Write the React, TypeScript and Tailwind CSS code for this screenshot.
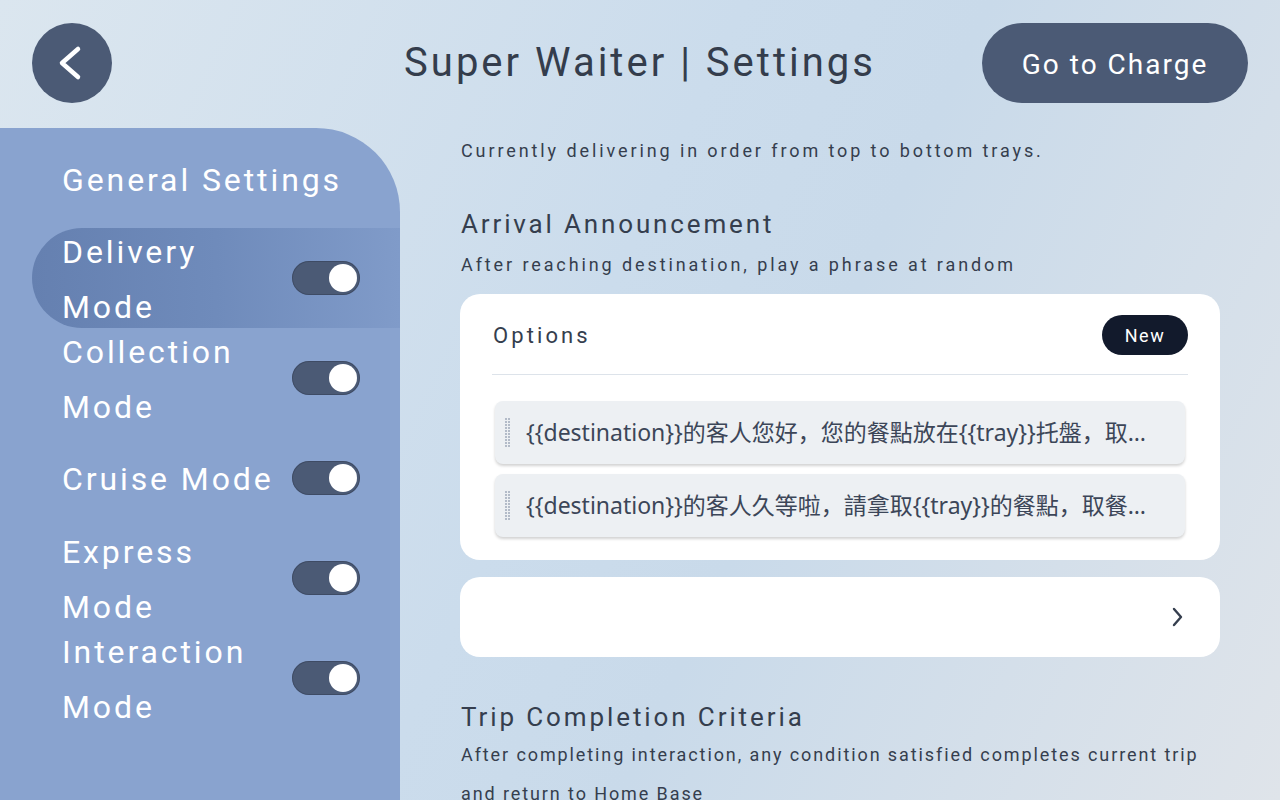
import { useState } from "react";

const rows = [
  { label: "Delivery Mode", two: true, active: true },
  { label: "Collection Mode", two: true },
  { label: "Cruise Mode", two: false },
  { label: "Express Mode", two: true },
  { label: "Interaction Mode", two: true },
];

const phrases = [
  "{{destination}}的客人您好，您的餐點放在{{tray}}托盤，取餐後請按下完成",
  "{{destination}}的客人久等啦，請拿取{{tray}}的餐點，取餐後請按下完成",
];

function Toggle({ on }: { on: boolean }) {
  return (
    <div className="w-[68px] h-[34px] shrink-0 rounded-full bg-[#4b5a75] flex items-center justify-end px-[3px] shadow-[inset_0_0_0_1px_rgba(40,50,70,0.35)]">
      <div className={on ? "w-[28px] h-[28px] rounded-full bg-white" : "w-[28px] h-[28px] rounded-full bg-white"} />
    </div>
  );
}

function DragHandle() {
  return (
    <svg width="6" height="30" viewBox="0 0 6 30" className="shrink-0">
      {Array.from({ length: 10 }).map((_, i) => (
        <g key={i} fill="#b3bbc8">
          <rect x="0" y={i * 3} width="2" height="2" />
          <rect x="3" y={i * 3} width="2" height="2" />
        </g>
      ))}
    </svg>
  );
}

export default function App() {
  const [toggles] = useState(rows.map(() => true));

  return (
    <div
      className="w-[1280px] h-[800px] overflow-hidden flex flex-col bg-[linear-gradient(115deg,#dbe6ef_0%,#cbdcec_45%,#c9daea_60%,#dfe4ea_100%)] text-[#353e4e]"
      style={{ fontFamily: "Roboto, 'Noto Sans', 'Noto Sans CJK SC', sans-serif" }}
    >
      {/* Header */}
      <header className="h-[128px] shrink-0 grid grid-cols-[1fr_auto_1fr] items-center px-[32px] pb-[2px]">
        <button className="w-[80px] h-[80px] rounded-full bg-[#4b5a75] flex items-center justify-center">
          <svg width="40" height="40" viewBox="0 0 40 40" fill="none">
            <path d="M26 6 L10 20 L26 34" stroke="white" strokeWidth="4.5" strokeLinecap="round" strokeLinejoin="round" />
          </svg>
        </button>
        <h1 className="text-[40px] tracking-[3px] text-[#343d4c]">Super Waiter | Settings</h1>
        <div className="flex justify-end">
          <button className="w-[266px] h-[80px] rounded-full bg-[#4b5a75] text-white text-[28px] tracking-[2px] flex items-center justify-center pt-[4px]">
            Go to Charge
          </button>
        </div>
      </header>

      <div className="flex flex-1 min-h-0">
        {/* Sidebar */}
        <aside className="w-[400px] shrink-0 bg-[#89a3cf] rounded-tr-[84px] pt-[27px] text-white">
          <div className="pl-[62px] h-[50px] flex items-center text-[32px] tracking-[2.9px] mb-[23px]">General Settings</div>
          {rows.map((r, i) => (
            <div
              key={r.label}
              className={
                r.active
                  ? "ml-[32px] h-[100px] flex items-center justify-between pl-[30px] pr-[40px] rounded-l-full bg-[linear-gradient(90deg,#6580b0_0%,#6f8bbb_50%,#809bc9_100%)]"
                  : "ml-[32px] h-[100px] flex items-center justify-between pl-[30px] pr-[40px]"
              }
            >
              <div className={r.two ? "w-[190px] pt-[3px] text-[32px] tracking-[2.9px] leading-[55px]" : "pt-[3px] text-[32px] tracking-[2.9px] leading-[55px]"}>
                {r.label}
              </div>
              <Toggle on={toggles[i]} />
            </div>
          ))}
        </aside>

        {/* Content */}
        <main className="flex-1 min-w-0 pl-[61px] pr-[60px] pt-[9px]">
          <p className="text-[18px] leading-[28px] tracking-[2.9px]">Currently delivering in order from top to bottom trays.</p>

          <h2 className="mt-[41px] text-[26px] leading-[36px] tracking-[2.85px]">Arrival Announcement</h2>
          <p className="mt-[9px] text-[18px] leading-[28px] tracking-[2.9px]">After reaching destination, play a phrase at random</p>

          <section className="mt-[15px] -ml-px bg-white rounded-[20px] px-[32px] pt-[21px] pb-[23px]">
            <div className="flex items-center justify-between pb-[19px] border-b border-[#dde3ea]">
              <span className="pl-px text-[22px] tracking-[3.1px]">Options</span>
              <span className="h-[40px] w-[86px] rounded-full bg-[#121a2c] text-white text-[18px] tracking-[1.5px] flex items-center justify-center">
                New
              </span>
            </div>
            <div className="mt-[26px] mx-[3px] flex flex-col gap-[10px]">
              {phrases.map((p) => (
                <div
                  key={p}
                  className="h-[63px] min-w-0 rounded-[8px] bg-[#edf0f3] shadow-[0_2px_3px_rgba(0,0,0,0.18)] flex items-center pl-[10px] pr-[34px] gap-[15px]"
                >
                  <DragHandle />
                  <span
                    className="min-w-0 truncate text-[23px] text-[#3c4658]"
                    style={{ fontFamily: "'Noto Sans', 'Noto Sans CJK SC', sans-serif" }}
                  >
                    {p}
                  </span>
                </div>
              ))}
            </div>
          </section>

          <section className="mt-[17px] -ml-px h-[80px] bg-white rounded-[20px] flex items-center justify-end pr-[36px]">
            <svg width="14" height="22" viewBox="0 0 14 22" fill="none">
              <path d="M4 3 L11 11 L4 19" stroke="#353e4e" strokeWidth="2.4" strokeLinecap="round" strokeLinejoin="round" />
            </svg>
          </section>

          <h2 className="mt-[42px] text-[26px] leading-[36px] tracking-[2.9px]">Trip Completion Criteria</h2>
          <p className="text-[18px] leading-[39px] tracking-[1.9px]">
            After completing interaction, any condition satisfied completes current trip and return to Home Base
          </p>
        </main>
      </div>
    </div>
  );
}
